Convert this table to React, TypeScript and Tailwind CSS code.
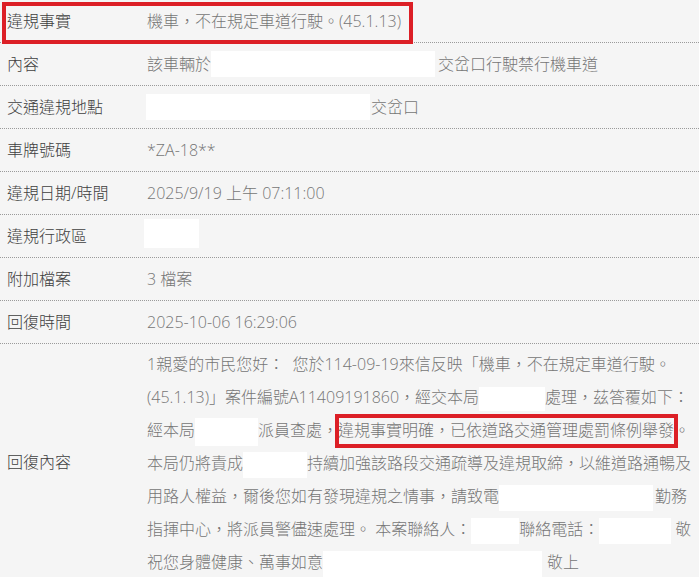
import type { ReactNode } from "react";

const Redact = ({ className }: { className: string }) => (
  <span className={`inline-block bg-white align-middle ${className}`} />
);

const Row = ({ label, children, last }: { label: string; children: ReactNode; last?: boolean }) => (
  <div
    className={`flex h-[43px] items-center ${last ? "" : "border-b border-dotted border-[#9a9a9a]"}`}
  >
    <div className="w-[147px] shrink-0 pl-[7px] font-light text-[#404040]">{label}</div>
    <div className="flex items-center whitespace-nowrap font-light text-[#767676]">{children}</div>
  </div>
);

export default function App() {
  return (
    <div
      className="relative h-[577px] w-[699px] overflow-hidden bg-[#f5f5f5] text-[16px]"
      style={{ fontFamily: '"Open Sans", "Noto Sans CJK TC", sans-serif' }}
    >
      <Row label="違規事實">機車，不在規定車道行駛。(45.1.13)</Row>
      <Row label="內容">
        該車輛於
        <Redact className="h-[26px] w-[224px]" />
        <span className="ml-[3px]">交岔口行駛禁行機車道</span>
      </Row>
      <Row label="交通違規地點">
        <Redact className="-ml-[1px] h-[26px] w-[224px]" />
        <span className="ml-[1px]">交岔口</span>
      </Row>
      <Row label="車牌號碼">*ZA-18**</Row>
      <Row label="違規日期/時間">2025/9/19 上午 07:11:00</Row>
      <Row label="違規行政區">
        <Redact className="-ml-[3px] -mt-[5px] h-[29px] w-[55px]" />
      </Row>
      <Row label="附加檔案">3 檔案</Row>
      <Row label="回復時間">2025-10-06 16:29:06</Row>

      {/* 回復內容 */}
      <div className="flex">
        <div className="flex w-[147px] shrink-0 items-center pl-[7px] font-light text-[#404040]">回復內容</div>
        <div className="whitespace-nowrap pt-[4px] font-light leading-[33px] text-[#767676]">
          <div>1親愛的市民您好：&nbsp; 您於114-09-19來信反映「機車，不在規定車道行駛。</div>
          <div>
            (45.1.13)」案件編號A11409191860，經交本局
            <Redact className="h-[24px] w-[66px]" />
            處理，茲答覆如下：
          </div>
          <div>
            經本局
            <Redact className="h-[28px] w-[63px]" />
            派員查處，
            <span className="relative inline-block">
              違規事實明確，已依道路交通管理處罰條例舉發
              <span className="absolute -left-[3px] -right-[4px] top-[0px] h-[34px] border-[4px] border-[#dc1f26]" />
            </span>
            。
          </div>
          <div>
            本局仍將責成
            <Redact className="h-[26px] w-[64px]" />
            持續加強該路段交通疏導及違規取締，以維道路通暢及
          </div>
          <div>
            用路人權益，爾後您如有發現違規之情事，請致電
            <Redact className="h-[26px] w-[154px]" />
            <span className="ml-[2px]">勤務</span>
          </div>
          <div>
            指揮中心，將派員警儘速處理。 本案聯絡人：
            <Redact className="h-[26px] w-[48px]" />
            聯絡電話：
            <Redact className="h-[26px] w-[72px]" />
            <span className="ml-[4px]">敬</span>
          </div>
          <div>
            祝您身體健康、萬事如意
            <Redact className="h-[26px] w-[219px]" />
            <span className="ml-[5px]">敬上</span>
          </div>
        </div>
      </div>

      <div className="absolute left-[2px] top-[2px] h-[42px] w-[411px] border-[4px] border-[#dc1f26]" />
    </div>
  );
}
